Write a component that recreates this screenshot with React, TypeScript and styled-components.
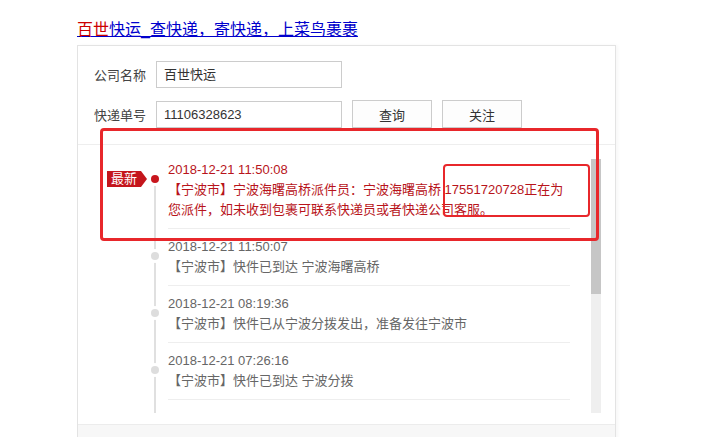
import styled, { createGlobalStyle } from 'styled-components';

const GlobalStyle = createGlobalStyle`
    body {
        margin: 0;
        background: #fff;
        font-family: "Liberation Sans", "Noto Sans CJK SC", sans-serif;
        color: #333;
    }
`;

const Page = styled.div`
    position: relative;
    padding: 20px 0 0 77px;
    height: 417px;
    overflow: hidden;
`;

const Title = styled.a`
    display: block;
    width: fit-content;
    font-size: 16px;
    line-height: 20px;
    margin-bottom: 5px;
    color: #0000cc;
    text-decoration: underline;
    span {
        color: #cc0000;
    }
`;

const Panel = styled.div`
    width: 537px;
    border: 1px solid #e3e3e3;
    border-bottom: none;
    box-shadow: 2px 0 3px rgba(0, 0, 0, 0.03);
`;

const Form = styled.div`
    display: flex;
    flex-direction: column;
    gap: 12px;
    padding: 15px 16px 16px;
`;

const FormRow = styled.div`
    display: flex;
    align-items: center;
    gap: 10px;
`;

const Label = styled.label`
    width: 52px;
    font-size: 13px;
    color: #444;
`;

const Input = styled.div`
    box-sizing: border-box;
    width: 186px;
    height: 27px;
    border: 1px solid #ccc;
    padding-left: 7px;
    font-size: 13px;
    line-height: 25px;
    color: #333;
`;

const Button = styled.button`
    box-sizing: border-box;
    width: 80px;
    height: 28px;
    border: 1px solid #ccc;
    background: #fdfdfd;
    font-family: inherit;
    font-size: 13px;
    color: #333;
    padding: 0;
`;

const ListArea = styled.div`
    display: flex;
    border-top: 1px solid #eee;
    padding: 14px 14px 11px 22px;
`;

const Scroller = styled.div`
    flex: 1;
    height: 254px;
    overflow: hidden;
`;

const ScrollTrack = styled.div`
    width: 10px;
    height: 254px;
    background: #efefef;
`;

const ScrollThumb = styled.div`
    height: 135px;
    background: #c6c6c6;
`;

const Item = styled.div<{ $first?: boolean }>`
    position: relative;
    margin-right: 21px;
    padding: ${p => (p.$first ? '1px' : '8px')} 0 0 68px;
    font-size: 13px;
    line-height: 20px;
    color: ${p => (p.$first ? '#b8141b' : '#666')};
    &::before {
        content: '';
        position: absolute;
        left: 54px;
        width: 2px;
        top: ${p => (p.$first ? '20px' : '0')};
        bottom: 0;
        background: #e0e0e0;
    }
`;

const Body = styled.div`
    border-bottom: 1px solid #eee;
    padding-bottom: 8px;
`;

const Dot = styled.span<{ $active?: boolean }>`
    position: absolute;
    left: 51px;
    top: ${p => (p.$active ? '16px' : '23px')};
    width: 8px;
    height: 8px;
    border-radius: 50%;
    background: ${p => (p.$active ? '#c8161d' : '#ddd')};
    box-shadow: 0 0 0 3px #fff;
`;

const Badge = styled.span`
    position: absolute;
    left: 7px;
    top: 12px;
    height: 16px;
    padding: 0 4px;
    background: #c4161c;
    color: #fff;
    font-size: 13px;
    line-height: 16px;
    &::after {
        content: '';
        position: absolute;
        right: -6px;
        top: 0;
        border-top: 8px solid transparent;
        border-bottom: 8px solid transparent;
        border-left: 6px solid #c4161c;
    }
`;

const Footer = styled.div`
    height: 20px;
    background: #f7f7f7;
    border-top: 1px solid #ececec;
`;

const Mark = styled.div<{ $w: number }>`
    position: absolute;
    box-sizing: border-box;
    border: ${p => p.$w}px solid #e8272b;
    border-radius: 4px;
    pointer-events: none;
`;

const OuterMark = styled(Mark)`
    left: 100px;
    top: 128px;
    width: 499px;
    height: 113px;
`;

const InnerMark = styled(Mark)`
    left: 443px;
    top: 164px;
    width: 147px;
    height: 53px;
`;

const traces = [
    {
        time: '2018-12-21 11:50:08',
        text: '【宁波市】宁波海曙高桥派件员：宁波海曙高桥 17551720728正在为您派件，如未收到包裹可联系快递员或者快递公司客服。',
    },
    { time: '2018-12-21 11:50:07', text: '【宁波市】快件已到达 宁波海曙高桥' },
    { time: '2018-12-21 08:19:36', text: '【宁波市】快件已从宁波分拨发出，准备发往宁波市' },
    { time: '2018-12-21 07:26:16', text: '【宁波市】快件已到达 宁波分拨' },
    { time: '2018-12-20 22:09:06', text: '【杭州市】快件已从杭州分拨发出，准备发往宁波分拨' },
    { time: '2018-12-20 20:31:42', text: '【杭州市】快件已到达 杭州分拨' },
];

export default function App() {
    return (
        <Page>
            <GlobalStyle />
            <Title href="#">
                <span>百世</span>快运_查快递，寄快递，上菜鸟裹裹
            </Title>
            <Panel>
                <Form>
                    <FormRow>
                        <Label>公司名称</Label>
                        <Input>百世快运</Input>
                    </FormRow>
                    <FormRow>
                        <Label>快递单号</Label>
                        <Input>11106328623</Input>
                        <Button>查询</Button>
                        <Button>关注</Button>
                    </FormRow>
                </Form>
                <ListArea>
                    <Scroller>
                        {traces.map((t, i) => (
                            <Item key={t.time} $first={i === 0}>
                                {i === 0 && <Badge>最新</Badge>}
                                <Dot $active={i === 0} />
                                <Body>
                                    <div>{t.time}</div>
                                    <div>{t.text}</div>
                                </Body>
                            </Item>
                        ))}
                    </Scroller>
                    <ScrollTrack>
                        <ScrollThumb />
                    </ScrollTrack>
                </ListArea>
                <Footer />
            </Panel>
            <OuterMark $w={3} />
            <InnerMark $w={2.5} />
        </Page>
    );
}
